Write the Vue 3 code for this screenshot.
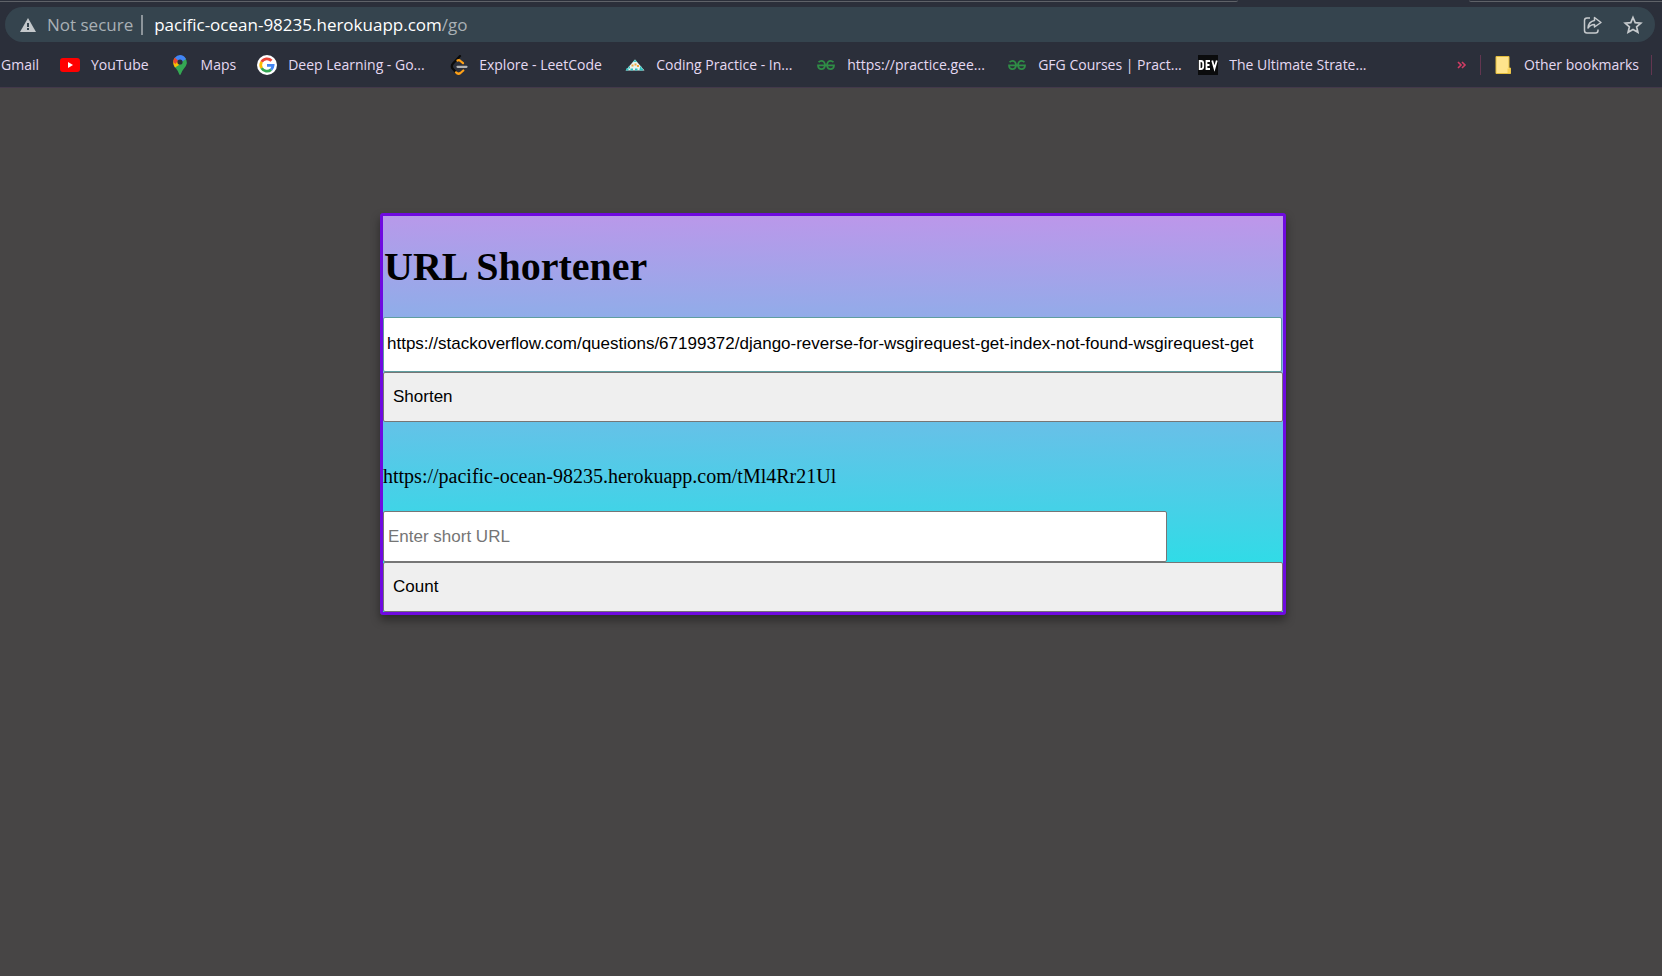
<script setup>
import { ref } from 'vue'

const longUrl = ref('https://stackoverflow.com/questions/67199372/django-reverse-for-wsgirequest-get-index-not-found-wsgirequest-get')
const shortUrl = ref('')
const address = 'pacific-ocean-98235.herokuapp.com'

const bookmarks = [
  { icon: 'youtube', label: 'YouTube' },
  { icon: 'maps', label: 'Maps' },
  { icon: 'google', label: 'Deep Learning - Go...', wide: true },
  { icon: 'leetcode', label: 'Explore - LeetCode', mid: true },
  { icon: 'ninja', label: 'Coding Practice - In...', wide: true },
  { icon: 'gfg', label: 'https://practice.gee...', wide: true },
  { icon: 'gfg', label: 'GFG Courses | Pract...', wide: true },
  { icon: 'dev', label: 'The Ultimate Strate...', wide: true },
]
</script>

<template>
  <div class="browser">
    <header class="chrome">
      <div class="tab-edge"><span class="edge-left"></span><span class="edge-right"></span></div>
      <div class="address-bar">
        <svg class="warning" viewBox="0 0 16 14" aria-hidden="true">
          <path d="M8 0 16 14H0Z" fill="#c4c8cb" />
          <path d="M7 5h2v4H7zM7 10h2v2H7z" fill="#35444e" />
        </svg>
        <span class="not-secure">Not secure</span>
        <span class="address-divider"></span>
        <span class="address"><b>{{ address }}</b>/go</span>
        <button class="icon-button" type="button" aria-label="Share this page">
          <svg viewBox="0 0 20 20" fill="none" stroke="#c6cacd" stroke-width="1.5" stroke-linejoin="round">
            <path d="M7 3H4Q1.500 3 1.500 5.500V15.500Q1.500 18 4 18H12.500Q15 18 15 15.500V14.500" />
            <path d="M11.500 2.500 18 7.500 11.500 12V9.500Q7.500 9.500 5 13Q5.500 6.500 11.500 5.500Z" />
          </svg>
        </button>
        <button class="icon-button" type="button" aria-label="Bookmark this tab">
          <svg viewBox="0 0 20 20" fill="none" stroke="#c6cacd" stroke-width="1.7">
            <path d="M10 2.500 12.200 7.600 17.800 8.100 13.600 11.800 14.900 17.300 10 14.400 5.100 17.300 6.400 11.800 2.200 8.100 7.800 7.600Z" />
          </svg>
        </button>
      </div>
      <nav class="bookmarks" aria-label="Bookmarks">
        <a class="bookmark" href="#">Gmail</a>
        <a
          v-for="(item, index) in bookmarks"
          :key="index"
          class="bookmark"
          :class="{ wide: item.wide, mid: item.mid }"
          href="#"
        >
          <svg v-if="item.icon === 'youtube'" viewBox="0 0 20 20" aria-hidden="true">
            <rect y="3" width="20" height="14" rx="3" fill="#f00" />
            <path d="M8 7v6l5-3Z" fill="#fff" />
          </svg>
          <svg v-else-if="item.icon === 'maps'" viewBox="0 0 20 20" aria-hidden="true">
            <path d="M3.500 9.500 15.500 3.500Q17 5.500 16.800 8.500Q16.300 11 14 13.500Q11.500 16.500 10.800 19.200Q10 20.600 9.200 19.200Q8.600 16.500 6 13.500Q4 11.500 3.500 9.500Z" fill="#34a853" />
            <path d="M3.200 8Q3 5 4.800 2.800L9 6.500 9 10 5 12.500Q3.500 10.500 3.200 8Z" fill="#fbbc04" />
            <path d="M4.800 2.800Q7 0 10 0 14 0 16 4L11.500 7 8 7Z" fill="#4285f4" />
            <path d="M4.800 2.800 8.200 5.600 5.500 9 3.300 7Q3.200 4.500 4.800 2.800Z" fill="#ea4335" />
            <circle cx="10" cy="7" r="2.600" fill="#2b2f3a" />
          </svg>
          <svg v-else-if="item.icon === 'google'" viewBox="0 0 20 20" aria-hidden="true">
            <circle cx="10" cy="10" r="10" fill="#fff" />
            <g fill="none" stroke-width="2.800">
              <path d="M14.500 5.800A6.200 6.200 0 0 0 4.600 6.900" stroke="#ea4335" />
              <path d="M4.600 6.900A6.200 6.200 0 0 0 4.600 13.100" stroke="#fbbc04" />
              <path d="M4.600 13.100A6.200 6.200 0 0 0 14.100 14.600" stroke="#34a853" />
              <path d="M14.100 14.600A6.200 6.200 0 0 0 16.100 10.300H10" stroke="#4285f4" />
            </g>
          </svg>
          <svg v-else-if="item.icon === 'leetcode'" viewBox="0 0 20 20" aria-hidden="true" fill="none" stroke-width="2.200" stroke-linecap="round">
            <path d="M12 1 5 8.500Q2.500 11.500 5 14L7.500 16.800" stroke="#0a0a0a" />
            <path d="M9.500 5.500Q11 4.500 12.500 6L15 8.200M8 17.300Q10 19.800 12.500 18L15.300 15.500" stroke="#ffa116" />
            <path d="M9.500 11.800H18.500" stroke="#b3b3b3" />
          </svg>
          <svg v-else-if="item.icon === 'ninja'" viewBox="0 0 20 20" aria-hidden="true">
            <path d="M10 4.500 19.500 15.500H.5Z" fill="#e6f4f0" />
            <path d="M10 4.500 12 7H8Z" fill="#3fc3c1" />
            <path d="M6.500 9.500h2v2h-2zM9.500 8.500h2v2h-2zM12 10h2v2h-2z" fill="#f2a43c" />
            <path d="M1 14.500h2.500M5.500 14.500h2.500M10 14.500h2.500M14.500 14.500h3.500M3.500 12.500h1.500M15 12.500h1.500" stroke="#2fc0bd" stroke-width="2" />
          </svg>
          <svg v-else-if="item.icon === 'gfg'" viewBox="0 0 20 20" aria-hidden="true" fill="none" stroke="#2f8d46" stroke-width="1.700">
            <path d="M2.500 7.200Q5.500 4.500 8 7Q9.300 9 9 11Q8 14.500 5 14.200Q2 13.500 2 10.400H18Q18 13.500 15 14.200Q12 14.500 11 11Q10.700 9 12 7Q14.500 4.500 17.500 7.200" />
          </svg>
          <svg v-else viewBox="0 0 20 20" aria-hidden="true">
            <rect width="20" height="20" fill="#0b0c0d" />
            <g fill="none" stroke="#fff" stroke-width="1.800">
              <path d="M1.700 6V14H3Q5.200 14 5.200 11.500V8.500Q5.200 6 3 6ZM12 6H8.500V14H12M8.500 10H11.500M14.200 5.500 16.500 13.500 18.800 5.500" />
            </g>
          </svg>
          <span>{{ item.label }}</span>
        </a>
        <button class="more" type="button" aria-label="More bookmarks">
          <svg viewBox="0 0 10 10" fill="none" stroke="#d23c64" stroke-width="1.600"><path d="M1 2 4 5 1 8M5 2 8 5 5 8" /></svg>
        </button>
        <a class="bookmark other" href="#">
          <svg viewBox="0 0 20 20" aria-hidden="true">
            <path d="M3 1.500H16V13H17.500V18.500H3Z" fill="#ffe48c" stroke="#e3bd3c" />
            <path d="M14.500 18V13.500H17.500V18.500Z" fill="#f7cf52" />
          </svg>
          <span>Other bookmarks</span>
        </a>
      </nav>
    </header>

    <main class="page">
      <section class="card">
        <h1>URL Shortener</h1>
        <form class="form" @submit.prevent>
          <input v-model="longUrl" class="field long" type="text" aria-label="Long URL" />
          <button class="action" type="submit">Shorten</button>
        </form>
        <p class="result">https://pacific-ocean-98235.herokuapp.com/tMl4Rr21Ul</p>
        <form class="form" @submit.prevent>
          <input v-model="shortUrl" class="field short" type="text" placeholder="Enter short URL" aria-label="Short URL" />
          <button class="action" type="submit">Count</button>
        </form>
      </section>
    </main>
  </div>
</template>

<style>
body {
  background: #474545;
}
</style>

<style scoped>
* {
  box-sizing: border-box;
}

.browser {
  display: flex;
  flex-direction: column;
  min-height: 100vh;
}

.chrome {
  background: #2b2f3a;
  border-bottom: 1px solid #43394a;
  font-family: "Open Sans", "Noto Sans", sans-serif;
}

.tab-edge {
  display: flex;
  justify-content: space-between;
  height: 7px;
}

.edge-left,
.edge-right {
  height: 2px;
  border-bottom: 1px solid #5f6268;
}

.edge-left {
  flex: 0 0 1238px;
  border-bottom-right-radius: 4px;
}

.edge-right {
  flex: 0 0 193px;
  border-bottom-left-radius: 4px;
}

.address-bar {
  display: flex;
  align-items: center;
  height: 35px;
  margin: 0 7px 0 5px;
  padding: 0 12px 0 15px;
  border-radius: 18px;
  background: #35444e;
  color: #a9b0b5;
  font-size: 17px;
}

.warning {
  width: 16px;
  height: 14px;
}

.not-secure {
  margin-left: 11px;
}

.address-divider {
  width: 2px;
  height: 20px;
  margin: 0 11px 0 8px;
  background: #8d959b;
}

.address {
  flex: 1;
}

.address b {
  color: #fff;
  font-weight: 400;
}

.icon-button,
.more {
  display: flex;
  padding: 0;
  border: 0;
  background: none;
}

.icon-button {
  margin-left: 20px;
}

.icon-button svg {
  width: 20px;
  height: 20px;
}

.bookmarks {
  display: flex;
  align-items: center;
  gap: 21px;
  height: 45px;
  padding: 0 10px 0 1px;
  font-size: 14px;
}

.bookmark {
  display: flex;
  align-items: center;
  gap: 11px;
  height: 20px;
  color: #e5d9f2;
  text-decoration: none;
  white-space: nowrap;
}

.bookmark svg {
  flex: none;
  width: 20px;
  height: 20px;
}

.wide {
  width: 170px;
}

.mid {
  width: 156px;
}

.more {
  margin-left: auto;
}

.more svg {
  width: 10px;
  height: 10px;
}

.other {
  margin-left: -8px;
  padding: 0 12px;
  border: solid #633650;
  border-width: 0 1px;
}

.page {
  flex: 1;
  padding: 125px 24px 24px 28px;
}

.card {
  max-width: 906px;
  margin: 0 auto;
  border: 3px solid #6f0ae0;
  border-radius: 3px;
  background: linear-gradient(181deg, #be96ea, #16e8e6);
  box-shadow: 0 5px 10px rgba(0, 0, 0, 0.4);
  font-family: "Liberation Serif", serif;
}

h1 {
  margin: 0;
  padding: 28px 1px 27px;
  font-size: 40px;
  line-height: 46px;
}

.form {
  display: flex;
  flex-direction: column;
}

.field,
.action {
  display: block;
  border: 1px solid #767676;
  border-radius: 2px;
  font-family: "Liberation Sans", Arial, sans-serif;
  font-size: 17px;
}

.field {
  background: #fff;
  color: #000;
}

.field::placeholder {
  color: #757575;
}

.long {
  width: calc(100% - 1px);
  height: 55px;
  padding: 0 3px 2px;
  border-color: #5f9ea0;
}

.short {
  width: 784px;
  max-width: 100%;
  height: 51px;
  padding: 0 4px;
}

.action {
  width: 100%;
  height: 50px;
  padding: 0 9px;
  background: #efefef;
  color: #000;
  text-align: left;
}

.result {
  margin: 0;
  padding: 43px 0 23px;
  font-size: 20px;
  line-height: 23px;
}
</style>
